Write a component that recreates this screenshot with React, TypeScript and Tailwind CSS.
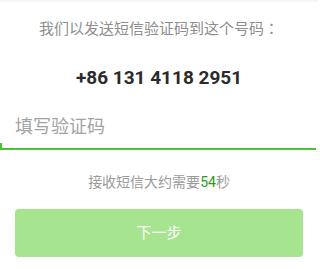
export default function App() {
  return (
    <div className="w-[318px] h-[269px] bg-white border-t-2 border-[#f8f3f5] font-['Roboto','Noto_Sans_CJK_SC',sans-serif]">
      <p className="mt-[16px] text-center text-[15px] leading-[20px] text-[#8e8e8e]">
        我们以发送短信验证码到这个号码<span className="font-['Noto_Sans_CJK_TC',sans-serif]">：</span>
      </p>
      <p className="mt-[27px] text-center text-[19px] leading-[24px] font-bold text-[#2b2b2b]">
        +86 131 4118 2951
      </p>
      <div className="relative mt-[25px] w-[316px] border-b-2 border-[#45c13a] pb-[8px] pl-[15px]">
        <input
          className="w-full bg-transparent text-[18px] leading-[24px] h-[24px] text-[#333] outline-none placeholder:text-[#a3a3a3]"
          placeholder="填写验证码"
        />
        <span className="absolute left-0 bottom-[-2px] w-[2px] h-[7px] bg-[#45c13a]" />
      </div>
      <p className="mt-[22px] text-center text-[14px] leading-[20px] text-[#9a9a9a]">
        接收短信大约需要<span className="text-[#1f9e1a]">54</span>秒
      </p>
      <button className="mt-[17px] mx-[15px] w-[288px] h-[48px] rounded-[4px] bg-[#a6e48f] text-white text-[15px]">
        下一步
      </button>
    </div>
  )
}
